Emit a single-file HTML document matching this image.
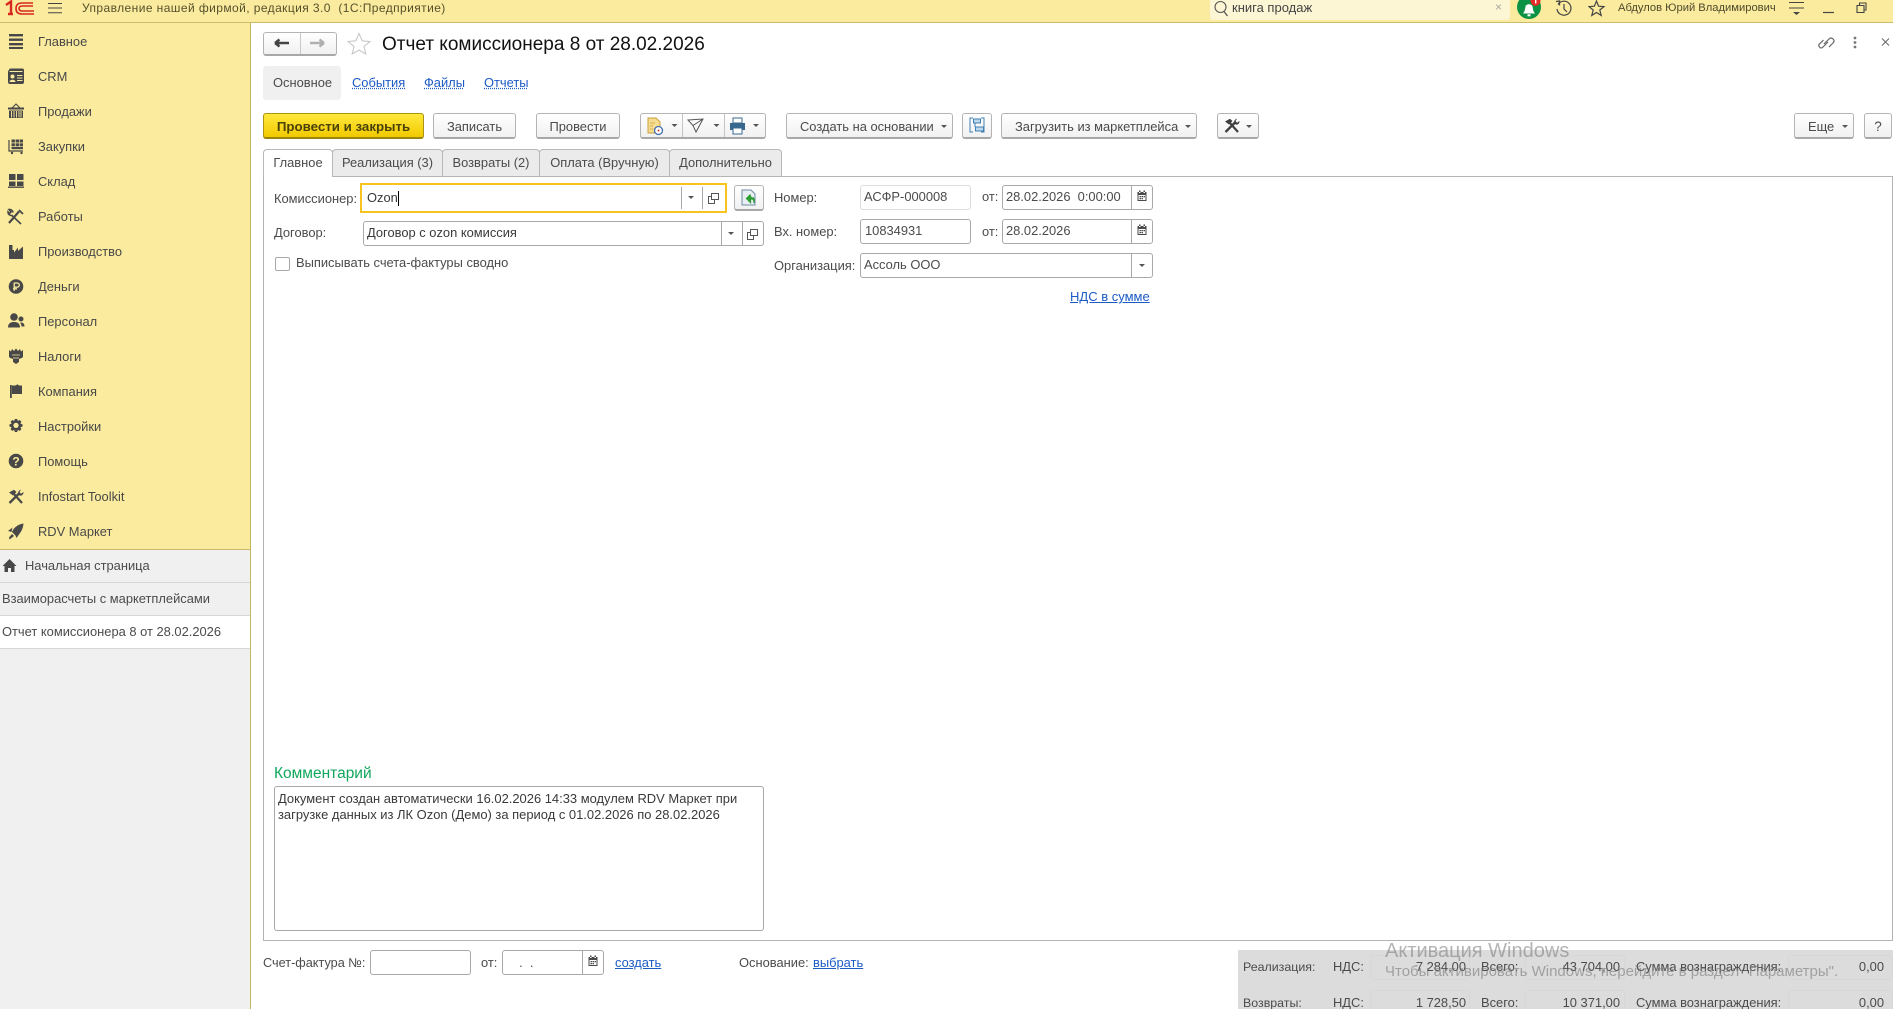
<!DOCTYPE html>
<html lang="ru"><head><meta charset="utf-8"><title>Отчет комиссионера 8 от 28.02.2026</title>
<style>
*{box-sizing:border-box}
html,body{margin:0;padding:0;width:1893px;height:1009px;overflow:hidden;background:#fff}
body{position:relative;font-family:"Liberation Sans",Arial,sans-serif;font-size:13px;color:#4a4a4a}
.a{position:absolute}
.t{position:absolute;white-space:pre;height:16px;line-height:16px;font-size:12.9px;color:#4b4b4b}
.l{color:#1c5bc4;text-decoration:underline}
.ld{color:#1c5bc4;text-decoration:underline dotted}
.b{position:absolute;top:113px;height:26px;border:1px solid #b4b4b4;border-bottom:2px solid #a8a8a8;border-radius:3px;background:linear-gradient(#fff,#f1f1f1);text-align:center;line-height:25px;color:#4b4b4b;font-size:12.9px;white-space:pre}
.f{position:absolute;border:1px solid #a9a9a9;border-radius:3px;background:#fff}
.s{position:absolute;width:1px;background:#a9a9a9}
.tab{position:absolute;top:149px;height:27px;background:#ebebeb;border:1px solid #b8b8b8;border-bottom:none;border-radius:4px 4px 0 0;text-align:center;line-height:26px;font-size:12.9px;color:#4b4b4b;white-space:pre}
.m{left:38px;font-size:12.9px;color:#484848}
.ar{position:absolute;width:0;height:0;border-left:3px solid transparent;border-right:3px solid transparent;border-top:3px solid #555}
.g{position:absolute;background:#dcdcdc}
.r{text-align:right}
</style></head><body>

<!-- top bar -->
<div class="a" style="left:0;top:0;width:1893px;height:23px;background:#fbeb9e;border-bottom:1px solid #cbbb6c"></div>
<svg class="a" style="left:0;top:0" width="70" height="22" viewBox="0 0 70 22">
<path d="M6 5L11 1.5V14M8 14H13" fill="none" stroke="#d8291f" stroke-width="2.4"/>
<path d="M33 3H22C17.5 3 16 5.5 16 8.5S17.5 14 22 14H34" fill="none" stroke="#d8291f" stroke-width="1.6"/>
<path d="M33 6H22.5C20 6 19 7 19 8.5S20 11 22.5 11H34" fill="none" stroke="#d8291f" stroke-width="1.6"/>
<path d="M48 3.5H62M48 8H62M48 12.8H62" stroke="#444" stroke-width="1"/>
</svg>
<div class="t" style="left:82px;top:0;font-size:12px;letter-spacing:.42px;color:#55502c">Управление нашей фирмой, редакция 3.0  (1С:Предприятие)</div>
<div class="a" style="left:1210px;top:0;width:300px;height:20px;background:#fdf6d4;border-radius:0 0 3px 3px"></div>
<svg class="a" style="left:1212px;top:0" width="18" height="20"><circle cx="8.5" cy="7" r="5.5" fill="none" stroke="#555" stroke-width="1.1"/><path d="M12 11.5L15.5 16" stroke="#555" stroke-width="1.3"/></svg>
<div class="t" style="left:1232px;top:0;font-size:13px;color:#444">книга продаж</div>
<div class="t" style="left:1495px;top:-1px;font-size:12px;color:#a8a8a0">×</div>
<svg class="a" style="left:1515px;top:0" width="30" height="22">
<circle cx="14" cy="7" r="12" fill="#0c9245"/>
<path d="M8 13.5C10 11 10 9 10.5 6.5 11 3.5 17 3.5 17.5 6.5 18 9 18 11 20 13.5Z" fill="#fff"/><rect x="12.5" y="14.3" width="3" height="2" fill="#fff"/>
<circle cx="20.5" cy="1" r="5" fill="#e22a27"/><rect x="20" y="0" width="1.4" height="3.5" fill="#fff"/>
</svg>
<svg class="a" style="left:1554px;top:0" width="20" height="18"><path d="M4 4.5A7 7 0 1 1 3 9" fill="none" stroke="#444" stroke-width="1.2"/><path d="M2 1.5L5.5 1V5.5" fill="none" stroke="#444" stroke-width="1.3"/><path d="M10 4V9L13 12" fill="none" stroke="#444" stroke-width="1.2"/></svg>
<svg class="a" style="left:1588px;top:0" width="18" height="17"><path d="M8.5 1L10.6 6.2 16 6.6 11.8 10 13.2 15.4 8.5 12.5 3.8 15.4 5.2 10 1 6.6 6.4 6.2Z" fill="none" stroke="#444" stroke-width="1.2"/></svg>
<div class="t" style="left:1618px;top:0;font-size:11.2px;color:#4e4a2c">Абдулов Юрий Владимирович</div>
<svg class="a" style="left:1787px;top:0" width="100" height="18"><path d="M2 2.5H17M2 8H17" stroke="#444" stroke-width="1"/><path d="M6 12H13L9.5 15Z" fill="#444"/><path d="M36 12.5H47" stroke="#444" stroke-width="1.2"/><path d="M70 5.5H77V12.5H70ZM72.5 5.5V3H79V10H77" fill="none" stroke="#444" stroke-width="1.1"/></svg>

<!-- sidebar -->
<div class="a" style="left:0;top:23px;width:251px;height:986px;background:#f0f0f0;border-right:1px solid #c5b55c"></div>
<div class="a" style="left:0;top:23px;width:250px;height:526px;background:#fbeb9e"></div>
<div class="a" style="left:0;top:549px;width:250px;height:1px;background:#c9ba6e"></div>
<div class="a" style="left:0;top:582px;width:250px;height:1px;background:#d6d6d6"></div>
<div class="a" style="left:0;top:615px;width:250px;height:33px;background:#fff"></div>
<div class="a" style="left:0;top:615px;width:250px;height:1px;background:#d6d6d6"></div>
<div class="a" style="left:0;top:648px;width:250px;height:1px;background:#d6d6d6"></div>

<svg class="a" style="left:0;top:0" width="34" height="580" fill="#484848">
<g><rect x="9" y="34" width="14" height="2.4"/><rect x="9" y="38.5" width="14" height="2.4"/><rect x="9" y="43" width="14" height="2.4"/><rect x="9" y="47" width="14" height="2"/></g>
<g><path d="M9 70Q9 68.5 11 68.5H22Q24 68.5 24 70V82Q24 84 22 84H10Q8 84 8 82V71Z"/><rect x="9.5" y="71" width="13" height="1" fill="#fbeb9e"/><circle cx="12.5" cy="76.5" r="2" fill="#fbeb9e"/><path d="M9.5 82C9.5 79 15.5 79 15.5 82Z" fill="#fbeb9e"/><path d="M17 75.5H22.5M17 78H22.5M17 80.5H22.5" stroke="#fbeb9e"/></g>
<g><path d="M12 108L16 104 20 108" fill="none" stroke="#484848" stroke-width="1.1"/><rect x="8" y="107.5" width="16" height="2"/><path d="M9 110.5H23V118H9Z"/><path d="M11.5 111V117.5M14 111V117.5M16.5 111V117.5M19 111V117.5M21 111V117.5" stroke="#fbeb9e" stroke-width=".9"/></g>
<g><path d="M9 140V151H23" fill="none" stroke="#484848" stroke-width="1.2"/><rect x="11.5" y="139.5" width="3.4" height="3"/><rect x="15.6" y="139.5" width="3.4" height="3"/><rect x="19.6" y="139.5" width="3.4" height="3"/><rect x="11.5" y="143.3" width="3.4" height="3"/><rect x="15.6" y="143.3" width="3.4" height="3"/><rect x="19.6" y="143.3" width="3.4" height="3"/><rect x="11.5" y="147" width="11.5" height="2.2"/><circle cx="12" cy="153" r="1.2"/><circle cx="21.5" cy="153" r="1.2"/></g>
<g><rect x="9" y="174" width="6.5" height="6"/><rect x="17" y="174" width="6.5" height="6"/><rect x="9" y="181.5" width="6.5" height="4.5"/><rect x="17" y="181.5" width="6.5" height="4.5"/><rect x="8" y="186.5" width="16" height="1.4"/></g>
<g fill="none" stroke="#484848"><path d="M9 223L19 211.5" stroke-width="2.2"/><path d="M13 212.5A3.5 3.5 0 0 0 9 209.5L11 212 9.5 213.5 8 212A3.5 3.5 0 0 0 12 215.5L21 224" stroke-width="1.6"/><path d="M19 210L23 214" stroke-width="1.8"/></g>
<g><path d="M9 245L11 245 11 250 14 250 14 252.5 18 247.5 18 251 23 246.5V259H9Z"/><rect x="10" y="245" width="2.5" height="5"/></g>
<g><circle cx="16" cy="286.5" r="7.3"/><path d="M14.2 283H17.2A2 2 0 0 1 17.2 287.2H14.2M14.2 282.6V290.8M13 288.8H17" fill="none" stroke="#fbeb9e" stroke-width="1.3"/></g>
<g><circle cx="14" cy="317" r="3.8"/><path d="M8 327.5C8 323 11 322 14 322S20 323 20 327.5Z"/><circle cx="21" cy="319" r="2.5"/><path d="M21 322.5C23 322.5 24.5 323.5 24.5 326.5H21.5C21.5 325 21 323.5 20 323Z"/></g>
<g><path d="M9 350V356.5C9 358 12 358.5 13 359L13 362 16 364 19 362 19 359C20 358.5 23 358 23 356.5V350L21 351.5 20 349 18 351 16 348.5 14 351 12 349 11 351.5Z"/><path d="M12 355H20M13 358H19" stroke="#fbeb9e" stroke-width=".7"/></g>
<g><rect x="10" y="385" width="1.8" height="13"/><path d="M12 385.5H15.5L17.5 384.2 19 385.5H22V394H12Z"/></g>
<g><path d="M14.8 419H17.2L17.8 421 19.7 420 21.4 421.7 20.4 423.6 22.5 424.2V426.6L20.4 427.3 21.4 429.2 19.7 430.9 17.8 429.9 17.2 432H14.8L14.2 429.9 12.3 430.9 10.6 429.2 11.6 427.3 9.5 426.6V424.2L11.6 423.6 10.6 421.7 12.3 420 14.2 421Z"/><circle cx="16" cy="425.4" r="2.6" fill="#fbeb9e"/></g>
<g><circle cx="16" cy="461" r="7.3"/><text x="16" y="465.5" font-family="Liberation Sans" font-weight="bold" font-size="12" text-anchor="middle" fill="#fbeb9e">?</text></g>
<g transform="translate(8 489)"><path d="M1 3.5L6 .8 8.5 3 5 6.5Z"/><path d="M5.5 4.5L14 14" fill="none" stroke="#484848" stroke-width="2.2"/><path d="M1.5 14L11 4.5" fill="none" stroke="#484848" stroke-width="2.4"/><path d="M10.5 5.5A3.2 3.2 0 0 1 13 .8L11.5 3 13 4.8 15.5 3A3.2 3.2 0 0 1 11.5 6.5Z"/></g>
<g><path d="M23.5 523.5C18 524 13.5 528 12 532L16 536C20 534.5 23 529.5 23.5 523.5Z"/><path d="M12.5 527.5L8 531 11.5 532ZM20 533L16.5 538 15.5 535.5Z"/><path d="M9 537.5L12 534 14 536 9.5 539.5Z"/></g>
<path d="M2.5 566L9.5 559 16.5 566H14.5V572H11V568H8V572H4.5V566Z"/>
</svg>

<div class="t m" style="top:34px">Главное</div>
<div class="t m" style="top:69px">CRM</div>
<div class="t m" style="top:104px">Продажи</div>
<div class="t m" style="top:139px">Закупки</div>
<div class="t m" style="top:174px">Склад</div>
<div class="t m" style="top:209px">Работы</div>
<div class="t m" style="top:244px">Производство</div>
<div class="t m" style="top:279px">Деньги</div>
<div class="t m" style="top:314px">Персонал</div>
<div class="t m" style="top:349px">Налоги</div>
<div class="t m" style="top:384px">Компания</div>
<div class="t m" style="top:419px">Настройки</div>
<div class="t m" style="top:454px">Помощь</div>
<div class="t m" style="top:489px">Infostart Toolkit</div>
<div class="t m" style="top:524px">RDV Маркет</div>
<div class="t" style="left:25px;top:558px">Начальная страница</div>
<div class="t" style="left:2px;top:591px">Взаиморасчеты с маркетплейсами</div>
<div class="t" style="left:2px;top:624px">Отчет комиссионера 8 от 28.02.2026</div>

<!-- header -->
<div class="a" style="left:263px;top:32px;width:74px;height:24px;border:1px solid #b4b4b4;border-bottom:2px solid #a8a8a8;border-radius:3px;background:linear-gradient(#fff,#f1f1f1)"></div>
<div class="a" style="left:300px;top:33px;width:1px;height:21px;background:#c8c8c8"></div>
<svg class="a" style="left:263px;top:32px" width="110" height="24"><path d="M12 11H26M12 11L16.5 7.5M12 11L16.5 14.5" fill="none" stroke="#444" stroke-width="2.4"/><path d="M47 11H61M61 11L56.5 7.5M61 11L56.5 14.5" fill="none" stroke="#b0b0b0" stroke-width="2.4"/><path d="M96 1.5L99.2 8.8 107 9.5 101 14.5 102.8 22 96 18 89.2 22 91 14.5 85 9.5 92.8 8.8Z" fill="none" stroke="#c8c8c8" stroke-width="1.1"/></svg>
<div class="t" style="left:382px;top:34px;height:22px;line-height:22px;font-size:19px;color:#111">Отчет комиссионера 8 от 28.02.2026</div>
<svg class="a" style="left:1815px;top:32px" width="78" height="22"><path d="M8 12L13 7Q15 5 17 7T17 11L13 15M12 10L7 15Q5 17 3.5 15T3.5 12L7.5 8" fill="none" stroke="#666" stroke-width="1.2" transform="translate(1 0)"/><circle cx="40" cy="6" r="1.4" fill="#777"/><circle cx="40" cy="10.5" r="1.4" fill="#777"/><circle cx="40" cy="15" r="1.4" fill="#777"/><path d="M67 6.5L74 13.5M74 6.5L67 13.5" stroke="#666" stroke-width="1"/></svg>

<div class="a" style="left:263px;top:66px;width:78px;height:34px;background:#f0f0f0;border-radius:3px"></div>
<div class="t" style="left:273px;top:75px">Основное</div>
<div class="t ld" style="left:352px;top:75px">События</div>
<div class="t ld" style="left:424px;top:75px">Файлы</div>
<div class="t ld" style="left:484px;top:75px">Отчеты</div>

<!-- buttons -->
<div class="b" style="left:263px;width:161px;background:linear-gradient(#ffe93d,#f2c900);border-color:#ab9410;border-bottom-color:#9b850c;font-weight:bold;font-size:13.3px;color:#4a4208">Провести и закрыть</div>
<div class="b" style="left:433px;width:83px">Записать</div>
<div class="b" style="left:536px;width:84px">Провести</div>
<div class="b" style="left:640px;width:126px"></div>
<div class="a" style="left:682px;top:114px;width:1px;height:23px;background:#c4c4c4"></div>
<div class="a" style="left:724px;top:114px;width:1px;height:23px;background:#c4c4c4"></div>
<svg class="a" style="left:640px;top:113px" width="126" height="26">
<path d="M8 5H16L20 9V20H8Z" fill="#f6dc90" stroke="#c9a13d"/><path d="M10 10H15M10 13H13M10 16H13" stroke="#c9a13d" stroke-width=".8"/><circle cx="18.5" cy="17.5" r="4" fill="#fff" stroke="#3f6fb0" stroke-width="1.3"/><circle cx="18.5" cy="17.5" r="1" fill="#cf3a2d"/>
<path d="M31.5 11H37.5L34.5 14Z" fill="#555"/>
<path d="M48 7L63 6 56 19 53 12.5Z M53 12.5L63 6" fill="none" stroke="#555" stroke-width="1"/>
<path d="M73.5 11H79.5L76.5 14Z" fill="#555"/>
<path d="M93 5H102V10H93Z" fill="#fff" stroke="#39688f"/><path d="M90 10H105V17H90Z" fill="#39688f"/><path d="M93 15H102V21H93Z" fill="#fff" stroke="#39688f"/>
<path d="M113 11H119L116 14Z" fill="#555"/>
</svg>
<div class="b" style="left:786px;width:167px;text-align:left;padding-left:13px">Создать на основании</div>
<div class="ar" style="left:941px;top:125px"></div>
<div class="b" style="left:962px;width:30px"></div>
<svg class="a" style="left:962px;top:113px" width="30" height="26" fill="none" stroke="#3f7fb5"><path d="M11 5H8V19H11M19 5H22V19H19" stroke-width="1"/><rect x="11.5" y="6" width="7" height="4" fill="#bcd7ea"/><rect x="13.5" y="14" width="8" height="4" fill="#bcd7ea"/><path d="M13 10V14" stroke-width="1"/></svg>
<div class="b" style="left:1001px;width:196px;text-align:left;padding-left:13px">Загрузить из маркетплейса</div>
<div class="ar" style="left:1185px;top:125px"></div>
<div class="b" style="left:1217px;width:42px"></div>
<svg class="a" style="left:1217px;top:113px" width="42" height="26" fill="#3f3f3f"><g transform="translate(7 5)"><path d="M1 3.5L6 .8 8.5 3 5 6.5Z"/><path d="M5.5 4.5L14 14" fill="none" stroke="#3f3f3f" stroke-width="2.2"/><path d="M1.5 14L11 4.5" fill="none" stroke="#3f3f3f" stroke-width="2.4"/><path d="M10.5 5.5A3.2 3.2 0 0 1 13 .8L11.5 3 13 4.8 15.5 3A3.2 3.2 0 0 1 11.5 6.5Z"/></g></svg>
<div class="ar" style="left:1246px;top:125px"></div>
<div class="b" style="left:1794px;width:60px;text-align:left;padding-left:13px">Еще</div>
<div class="ar" style="left:1842px;top:125px"></div>
<div class="b" style="left:1864px;width:28px;font-size:13.5px">?</div>

<!-- tabs -->
<div class="a" style="left:263px;top:176px;width:1630px;height:765px;border:1px solid #b4b4b4;background:#fff"></div>
<div class="tab" style="left:332px;width:111px">Реализация (3)</div>
<div class="tab" style="left:442px;width:98px">Возвраты (2)</div>
<div class="tab" style="left:539px;width:131px">Оплата (Вручную)</div>
<div class="tab" style="left:669px;width:113px">Дополнительно</div>
<div class="tab" style="left:263px;width:70px;height:28px;background:#fff">Главное</div>

<!-- form left -->
<div class="t" style="left:274px;top:191px">Комиссионер:</div>
<div class="a" style="left:360px;top:183px;width:367px;height:30px;border:2px solid #f6c41d;background:#fff"></div>
<div class="t" style="left:367px;top:190px;color:#3a3a3a">Ozon</div>
<div class="a" style="left:398px;top:191px;width:1px;height:15px;background:#000"></div>
<div class="s" style="left:681px;top:187px;height:22px"></div>
<div class="s" style="left:702px;top:187px;height:22px"></div>
<div class="ar" style="left:688px;top:196px;border-top-color:#555"></div>
<svg class="a" style="left:707px;top:192px" width="14" height="14" fill="none" stroke="#555"><path d="M4.5 1.5H11.5V7.5H4.5Z"/><path d="M4.5 4.5H1.5V11.5H7.5V7.5"/></svg>
<div class="b" style="left:734px;top:185px;width:30px;height:26px"></div>
<svg class="a" style="left:734px;top:185px" width="30" height="26"><path d="M8 5H17L21 9V20H8Z" fill="#e9eef3" stroke="#6d8ca3"/><path d="M20 13H14M16.5 9.5L12.5 13.5 16.5 17.5V14H20V18" fill="#34a838" stroke="#2b9a30" stroke-width="1.2"/></svg>

<div class="t" style="left:274px;top:225px">Договор:</div>
<div class="f" style="left:363px;top:221px;width:401px;height:25px"></div>
<div class="t" style="left:367px;top:225px;color:#3a3a3a">Договор с ozon комиссия</div>
<div class="s" style="left:721px;top:222px;height:23px"></div>
<div class="s" style="left:742px;top:222px;height:23px"></div>
<div class="ar" style="left:728px;top:232px"></div>
<svg class="a" style="left:746px;top:228px" width="14" height="14" fill="none" stroke="#555"><path d="M4.5 1.5H11.5V7.5H4.5Z"/><path d="M4.5 4.5H1.5V11.5H7.5V7.5"/></svg>
<div class="a" style="left:275px;top:257px;width:15px;height:14px;border:1px solid #aaa;border-radius:2px;background:#fff"></div>
<div class="t" style="left:296px;top:255px">Выписывать счета-фактуры сводно</div>

<!-- form right -->
<div class="t" style="left:774px;top:189.5px">Номер:</div>
<div class="f" style="left:860px;top:185px;width:111px;height:25px;border-color:#dcdcdc"></div>
<div class="t" style="left:864px;top:189px">АСФР-000008</div>
<div class="t" style="left:982px;top:189px">от:</div>
<div class="f" style="left:1002px;top:185px;width:151px;height:25px"></div>
<div class="t" style="left:1006px;top:189px">28.02.2026  0:00:00</div>
<div class="s" style="left:1131px;top:186px;height:23px"></div>
<div class="t" style="left:774px;top:224px">Вх. номер:</div>
<div class="f" style="left:860px;top:219px;width:111px;height:25px"></div>
<div class="t" style="left:865px;top:223px">10834931</div>
<div class="t" style="left:982px;top:224px">от:</div>
<div class="f" style="left:1002px;top:219px;width:151px;height:25px"></div>
<div class="t" style="left:1006px;top:223px">28.02.2026</div>
<div class="s" style="left:1131px;top:220px;height:23px"></div>
<svg class="a" style="left:1136px;top:190px" width="12" height="50" fill="#4a4a4a"><path d="M1.5 2H10.5V11H1.5ZM2.5 5V10H9.5V5Z M3 .5H4.5V3H3ZM7.5 .5H9V3H7.5ZM3.5 6H5V7.3H3.5ZM5.5 6H7V7.3H5.5ZM7.5 6H9V7.3H7.5ZM3.5 8H5V9.3H3.5ZM5.5 8H7V9.3H5.5Z" fill-rule="evenodd"/><path transform="translate(0 34)" d="M1.5 2H10.5V11H1.5ZM2.5 5V10H9.5V5Z M3 .5H4.5V3H3ZM7.5 .5H9V3H7.5ZM3.5 6H5V7.3H3.5ZM5.5 6H7V7.3H5.5ZM7.5 6H9V7.3H7.5ZM3.5 8H5V9.3H3.5ZM5.5 8H7V9.3H5.5Z" fill-rule="evenodd"/></svg>
<div class="t" style="left:774px;top:258px">Организация:</div>
<div class="f" style="left:860px;top:253px;width:293px;height:25px"></div>
<div class="t" style="left:864px;top:257px">Ассоль ООО</div>
<div class="s" style="left:1131px;top:254px;height:23px"></div>
<div class="ar" style="left:1139px;top:264px"></div>
<div class="t l" style="left:1070px;top:289px;font-size:13px">НДС в сумме</div>

<!-- comment -->
<div class="t" style="left:274px;top:766px;font-size:15.5px;color:#10a75c">Комментарий</div>
<div class="f" style="left:274px;top:786px;width:490px;height:145px"></div>
<div class="t" style="left:278px;top:791px;font-size:12.95px;color:#3a3a3a">Документ создан автоматически 16.02.2026 14:33 модулем RDV Маркет при</div>
<div class="t" style="left:278px;top:807px;font-size:12.95px;color:#3a3a3a">загрузке данных из ЛК Ozon (Демо) за период с 01.02.2026 по 28.02.2026</div>

<!-- bottom -->
<div class="t" style="left:263px;top:955px;font-size:12.7px">Счет-фактура №:</div>
<div class="f" style="left:370px;top:950px;width:101px;height:25px"></div>
<div class="t" style="left:481px;top:955px">от:</div>
<div class="f" style="left:502px;top:950px;width:102px;height:25px"></div>
<div class="t" style="left:512px;top:955px">  .  .</div>
<div class="s" style="left:582px;top:951px;height:23px"></div>
<svg class="a" style="left:587px;top:955px" width="12" height="14" fill="#4a4a4a"><path d="M1.5 2H10.5V11H1.5ZM2.5 5V10H9.5V5Z M3 .5H4.5V3H3ZM7.5 .5H9V3H7.5ZM3.5 6H5V7.3H3.5ZM5.5 6H7V7.3H5.5ZM7.5 6H9V7.3H7.5ZM3.5 8H5V9.3H3.5ZM5.5 8H7V9.3H5.5Z" fill-rule="evenodd"/></svg>
<div class="t l" style="left:615px;top:955px">создать</div>
<div class="t" style="left:739px;top:955px">Основание:</div>
<div class="t l" style="left:813px;top:955px">выбрать</div>

<!-- totals -->
<div class="g" style="left:1238px;top:950px;width:655px;height:59px"></div>
<div class="a" style="left:1370px;top:955px;width:100px;height:25px;border:1px solid #d7d7d7;border-radius:3px"></div>
<div class="a" style="left:1525px;top:955px;width:100px;height:25px;border:1px solid #d7d7d7;border-radius:3px"></div>
<div class="a" style="left:1788px;top:955px;width:105px;height:25px;border:1px solid #d7d7d7;border-radius:3px"></div>
<div class="a" style="left:1370px;top:990px;width:100px;height:19px;border:1px solid #d7d7d7;border-bottom:0;border-radius:3px 3px 0 0"></div>
<div class="a" style="left:1525px;top:990px;width:100px;height:19px;border:1px solid #d7d7d7;border-bottom:0;border-radius:3px 3px 0 0"></div>
<div class="a" style="left:1788px;top:990px;width:105px;height:19px;border:1px solid #d7d7d7;border-bottom:0;border-radius:3px 3px 0 0"></div>
<div class="t" style="left:1243px;top:959px;font-size:12.4px">Реализация:</div>
<div class="t" style="left:1333px;top:959px">НДС:</div>
<div class="t r" style="left:1400px;width:66px;top:959px">7 284,00</div>
<div class="t" style="left:1481px;top:959px">Всего:</div>
<div class="t r" style="left:1540px;width:80px;top:959px">43 704,00</div>
<div class="t" style="left:1636px;top:959px">Сумма вознаграждения:</div>
<div class="t r" style="left:1824px;width:60px;top:959px">0,00</div>
<div class="t" style="left:1243px;top:995px;font-size:12.4px">Возвраты:</div>
<div class="t" style="left:1333px;top:995px">НДС:</div>
<div class="t r" style="left:1400px;width:66px;top:995px">1 728,50</div>
<div class="t" style="left:1481px;top:995px">Всего:</div>
<div class="t r" style="left:1540px;width:80px;top:995px">10 371,00</div>
<div class="t" style="left:1636px;top:995px">Сумма вознаграждения:</div>
<div class="t r" style="left:1824px;width:60px;top:995px">0,00</div>

<!-- watermark -->
<div class="t" style="left:1385px;top:939px;height:24px;line-height:24px;font-size:20px;color:rgba(120,120,120,.55)">Активация Windows</div>
<div class="t" style="left:1385px;top:963px;height:18px;line-height:18px;font-size:15px;color:rgba(120,120,120,.6)">Чтобы активировать Windows, перейдите в раздел "Параметры".</div>
</body></html>
